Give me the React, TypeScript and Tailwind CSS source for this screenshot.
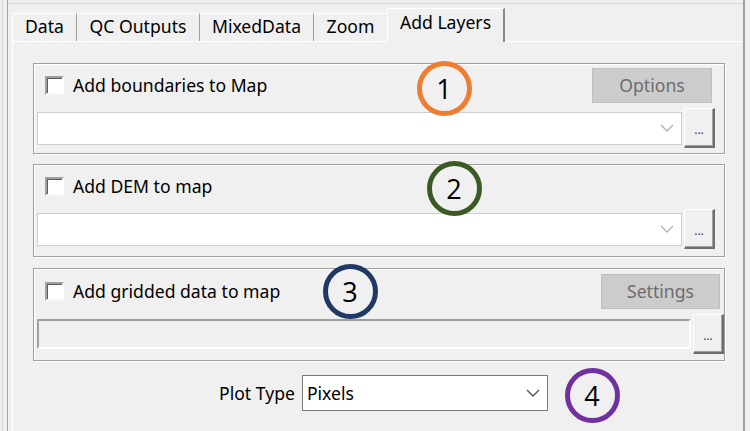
import React from "react";

const TABS = [
  { label: "Data", w: 65 },
  { label: "QC Outputs", w: 123 },
  { label: "MixedData", w: 114 },
  { label: "Zoom", w: 74 },
];

function Checkbox() {
  return (
    <span className="w-[19px] h-[19px] shrink-0 border-2 border-t-[#a0a0a0] border-l-[#a0a0a0] border-r-white border-b-[#f8f8f8] bg-white shadow-[inset_1px_1px_0_#5a5a5a]" />
  );
}

function Chevron({ color }: { color: string }) {
  return (
    <svg width="14" height="8" viewBox="0 0 14 8" fill="none">
      <path d="M1 1l6 6 6-6" stroke={color} strokeWidth="1.3" />
    </svg>
  );
}

function DotsButton() {
  return (
    <button className="w-[31px] h-[40px] shrink-0 bg-[#f0f0f0] border-l border-t border-white border-r-2 border-b-2 border-r-[#6e6e6e] border-b-[#6e6e6e] shadow-[inset_-1px_-1px_0_#a0a0a0] flex items-end justify-center pb-[10px] text-[12px] leading-none text-[#333a80]">
      ...
    </button>
  );
}

function GreyButton({ label, w }: { label: string; w: number }) {
  return (
    <div
      className="h-[35px] bg-[#cccccc] border border-[#bfbfbf] flex items-center justify-center text-[#6d6d6d]"
      style={{ width: w }}
    >
      {label}
    </div>
  );
}

function Group({
  label,
  button,
  buttonW,
  buttonPr,
  disabled,
  pt,
  pb,
}: {
  label: string;
  button?: string;
  buttonW?: number;
  buttonPr?: number;
  disabled?: boolean;
  pt: number;
  pb: number;
}) {
  return (
    <div
      className="w-[692px] border border-[#a0a0a0] shadow-[inset_1px_1px_0_#fff,1px_1px_0_#fff]"
      style={{ paddingTop: pt, paddingBottom: pb }}
    >
      <div className="flex items-center h-[35px] pl-[11px]" style={{ paddingRight: buttonPr }}>
        <Checkbox />
        <span className="ml-[9px] flex-1">{label}</span>
        {button && <GreyButton label={button} w={buttonW ?? 120} />}
      </div>
      <div className="flex items-center h-[40px] mt-[5px] pl-[3px] gap-[2px]">
        {disabled ? (
          <div className="h-[30px] w-[654px] bg-[#f0f0f0] border-t-2 border-l-2 border-t-[#a0a0a0] border-l-[#a0a0a0] border-b-2 border-r-2 border-b-white border-r-white" />
        ) : (
          <div className="h-[33px] w-[645px] bg-white border border-[#cfcfcf] flex items-center justify-end pr-[7px]">
            <Chevron color="#b0b0b0" />
          </div>
        )}
        <DotsButton />
      </div>
    </div>
  );
}

function Marker({ n, color, x, y }: { n: number; color: string; x: number; y: number }) {
  return (
    <div
      className="absolute w-[55px] h-[55px] rounded-full border-[5px] flex items-center justify-center font-['Open_Sans',sans-serif] text-[27px] leading-none text-black"
      style={{ left: x - 27.5, top: y - 27.5, borderColor: color }}
    >
      {n}
    </div>
  );
}

export default function App() {
  return (
    <div className="relative w-[750px] h-[431px] overflow-hidden bg-[#f0f0f0] font-['Noto_Sans',sans-serif] text-[17.6px] text-black">
      <div className="flex h-full">
        <div className="ml-[2px] w-[5px] border-l border-[#d4d4d4]" />
        <div className="flex-1 flex flex-col border-l border-[#a0a0a0]">
          <div className="h-[4px] border-b border-[#d6d6d6] shrink-0" />
          <div className="flex items-end h-[33px] mt-[4px] pl-[4px] shrink-0">
            {TABS.map((t, i) => (
              <div
                key={t.label}
                className={`h-[28px] flex items-center justify-center pb-[2px] border-t border-white border-r border-r-[#a0a0a0] ${
                  i === 0 ? "border-l border-l-white" : ""
                }`}
                style={{ width: t.w }}
              >
                {t.label}
              </div>
            ))}
            <div className="relative z-10 h-[34px] w-[118px] -mb-[1px] bg-[#f0f0f0] border-t border-l border-white border-r-2 border-r-[#8a8a8a] flex items-center justify-center pb-[6px] -ml-[1px]">
              Add Layers
            </div>
          </div>
          <div className="flex-1 ml-[4px] border-t border-l border-white pl-[20px] pt-[21px]">
            <div className="flex flex-col">
              <Group label="Add boundaries to Map" button="Options" buttonW={120} buttonPr={12} pt={4} pb={5} />
              <div className="h-[10px]" />
              <Group label="Add DEM to map" pt={4} pb={7} />
              <div className="h-[11px]" />
              <Group label="Add gridded data to map" button="Settings" buttonW={119} buttonPr={4} disabled pt={5} pb={6} />
            </div>
            <div className="flex items-center mt-[14px] pl-[186px] gap-[7px]">
              <span>Plot Type</span>
              <div className="w-[246px] h-[36px] bg-white border border-[#7a7a7a] flex items-center pl-[4px] pr-[7px]">
                <span className="flex-1">Pixels</span>
                <Chevron color="#505050" />
              </div>
            </div>
          </div>
        </div>
        <div className="w-[2px] bg-[#a0a0a0] mr-[5px]" />
      </div>
      <Marker n={1} color="#ed7d31" x={444} y={88} />
      <Marker n={2} color="#3a5a22" x={454} y={188} />
      <Marker n={3} color="#1f3864" x={350} y={291} />
      <Marker n={4} color="#7030a0" x={592} y={395} />
    </div>
  );
}
